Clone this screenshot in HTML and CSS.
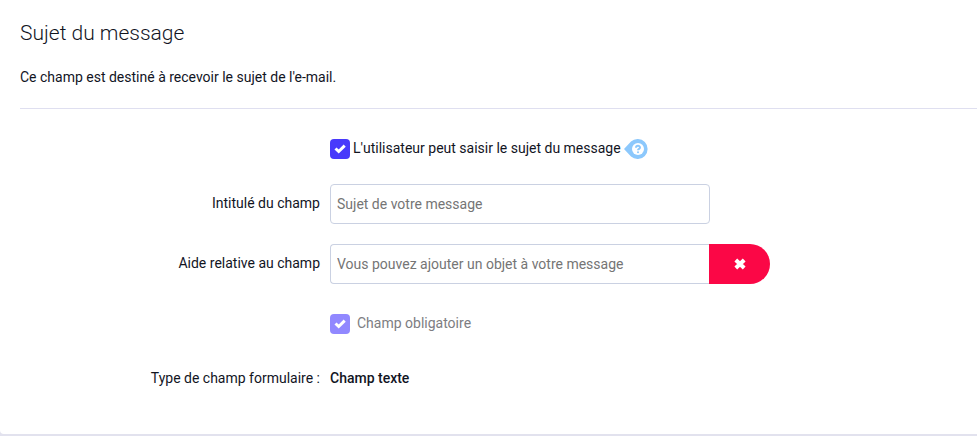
FILE: index.html
```html
<!DOCTYPE html>
<html lang="fr">
<head>
<meta charset="utf-8">
<title>Sujet du message</title>
<link rel="stylesheet" href="styles.css">
</head>
<body>
<main class="card">
  <header class="card-header">
    <h1 class="title">Sujet du message</h1>
    <p class="intro">Ce champ est destiné à recevoir le sujet de l'e-mail.</p>
  </header>
  <form class="form">
    <div class="row">
      <div class="field check-field">
        <span class="check">
          <input class="check-input" type="checkbox" id="allow" checked>
          <svg class="check-mark" viewBox="0 0 12 12" aria-hidden="true"><path d="M1.500 5.500 L4.700 8.500 L10.700 2.700"/></svg>
        </span>
        <label class="label" for="allow">L'utilisateur peut saisir le sujet du message</label>
        <button class="help" type="button" aria-label="Aide">
          <svg class="help-icon" viewBox="0 0 24 20" aria-hidden="true">
            <path class="help-shape" d="M0 10 L7 2.500 A10 10 0 1 1 7 17.500 Z"/>
            <circle class="help-disc" cx="14" cy="10" r="6"/>
            <path class="help-hook" d="M12 8.700 C12 6.200 16 6.200 16 8.600 C16 10 14 9.800 14 11.300"/>
            <circle class="help-dot" cx="14" cy="13.300" r="1"/>
          </svg>
        </button>
      </div>
    </div>
    <div class="row">
      <label class="label" for="name">Intitulé du champ</label>
      <div class="field"><input class="text-input" type="text" id="name" placeholder="Sujet de votre message"></div>
    </div>
    <div class="row">
      <label class="label" for="hint">Aide relative au champ</label>
      <div class="field">
        <input class="text-input joined" type="text" id="hint" placeholder="Vous pouvez ajouter un objet à votre message">
        <button class="remove" type="button" aria-label="Supprimer">
          <svg class="remove-icon" viewBox="0 0 12 12" aria-hidden="true"><path d="M1.800 2 L10.200 10 M10.200 2 L1.800 10"/></svg>
        </button>
      </div>
    </div>
    <div class="row disabled">
      <div class="field check-field">
        <span class="check">
          <input class="check-input" type="checkbox" id="required" checked disabled>
          <svg class="check-mark" viewBox="0 0 12 12" aria-hidden="true"><path d="M1.500 5.500 L4.700 8.500 L10.700 2.700"/></svg>
        </span>
        <label class="label" for="required">Champ obligatoire</label>
      </div>
    </div>
    <div class="row type-row">
      <span class="label">Type de champ formulaire :</span>
      <strong class="value">Champ texte</strong>
    </div>
  </form>
</main>
</body>
</html>
```
FILE: styles.css
```css
* {
  box-sizing: border-box;
}

body {
  margin: 0;
  background: #e2e2ee;
  color: #12151f;
  font: 14px/20px Roboto, sans-serif;
}

.card {
  padding: 19px 0 40px 20px;
  background: #fff;
  border-bottom-left-radius: 4px;
}

.card-header {
  padding-bottom: 21px;
  border-bottom: 1px solid #dfdff0;
}

.title {
  margin: 0 0 20px;
  font-size: 21px;
  line-height: 28px;
  font-weight: 300;
}

.intro {
  margin: 0;
}

.form {
  display: grid;
  gap: 20px;
  padding-top: 20px;
}

.row {
  display: grid;
  grid-template-columns: 300px minmax(0, 440px);
  column-gap: 10px;
  align-items: center;
}

.type-row {
  min-height: 30px;
}

.label,
.value {
  padding-bottom: 2px;
}

.row > .label {
  text-align: right;
}

.value {
  font-weight: 500;
}

.field {
  display: flex;
}

.check-field {
  grid-column: 2;
  align-items: center;
  gap: 3px;
  height: 35px;
  padding-top: 5px;
}

.disabled .check-field {
  height: 40px;
  padding: 0;
  gap: 7px;
  color: #7d7d82;
}

.check {
  display: grid;
  place-items: center;
}

.check-input {
  appearance: none;
  grid-area: 1 / 1;
  width: 20px;
  height: 20px;
  margin: 0;
  border-radius: 4px;
  background: #4839fb;
}

.check-input:disabled {
  background: #9188ff;
}

.check-mark {
  grid-area: 1 / 1;
  width: 12px;
  height: 12px;
  fill: none;
  stroke: #fff;
  stroke-width: 3;
  pointer-events: none;
}

.help {
  display: flex;
  padding: 0;
  border: 0;
  background: none;
}

.help-icon {
  width: 24px;
  height: 20px;
}

.help-shape {
  fill: #8cc8fc;
}

.help-disc {
  fill: #fff;
}

.help-hook {
  fill: none;
  stroke: #8cc8fc;
  stroke-width: 2;
}

.help-dot {
  fill: #8cc8fc;
}

.text-input {
  width: 380px;
  min-width: 0;
  height: 40px;
  padding: 0 6px;
  border: 1px solid #cad1e2;
  border-radius: 4px;
  background: #fff;
  color: inherit;
  font: inherit;
}

.text-input::placeholder {
  color: #757575;
}

.joined {
  flex: 1;
  border-right: 0;
  border-radius: 4px 0 0 4px;
}

.remove {
  display: grid;
  place-items: center;
  width: 61px;
  height: 40px;
  padding: 0;
  border: 0;
  border-radius: 0 20px 20px 0;
  background: #fb0746;
}

.remove-icon {
  width: 12px;
  height: 12px;
  fill: none;
  stroke: #fff;
  stroke-width: 4;
}
```
